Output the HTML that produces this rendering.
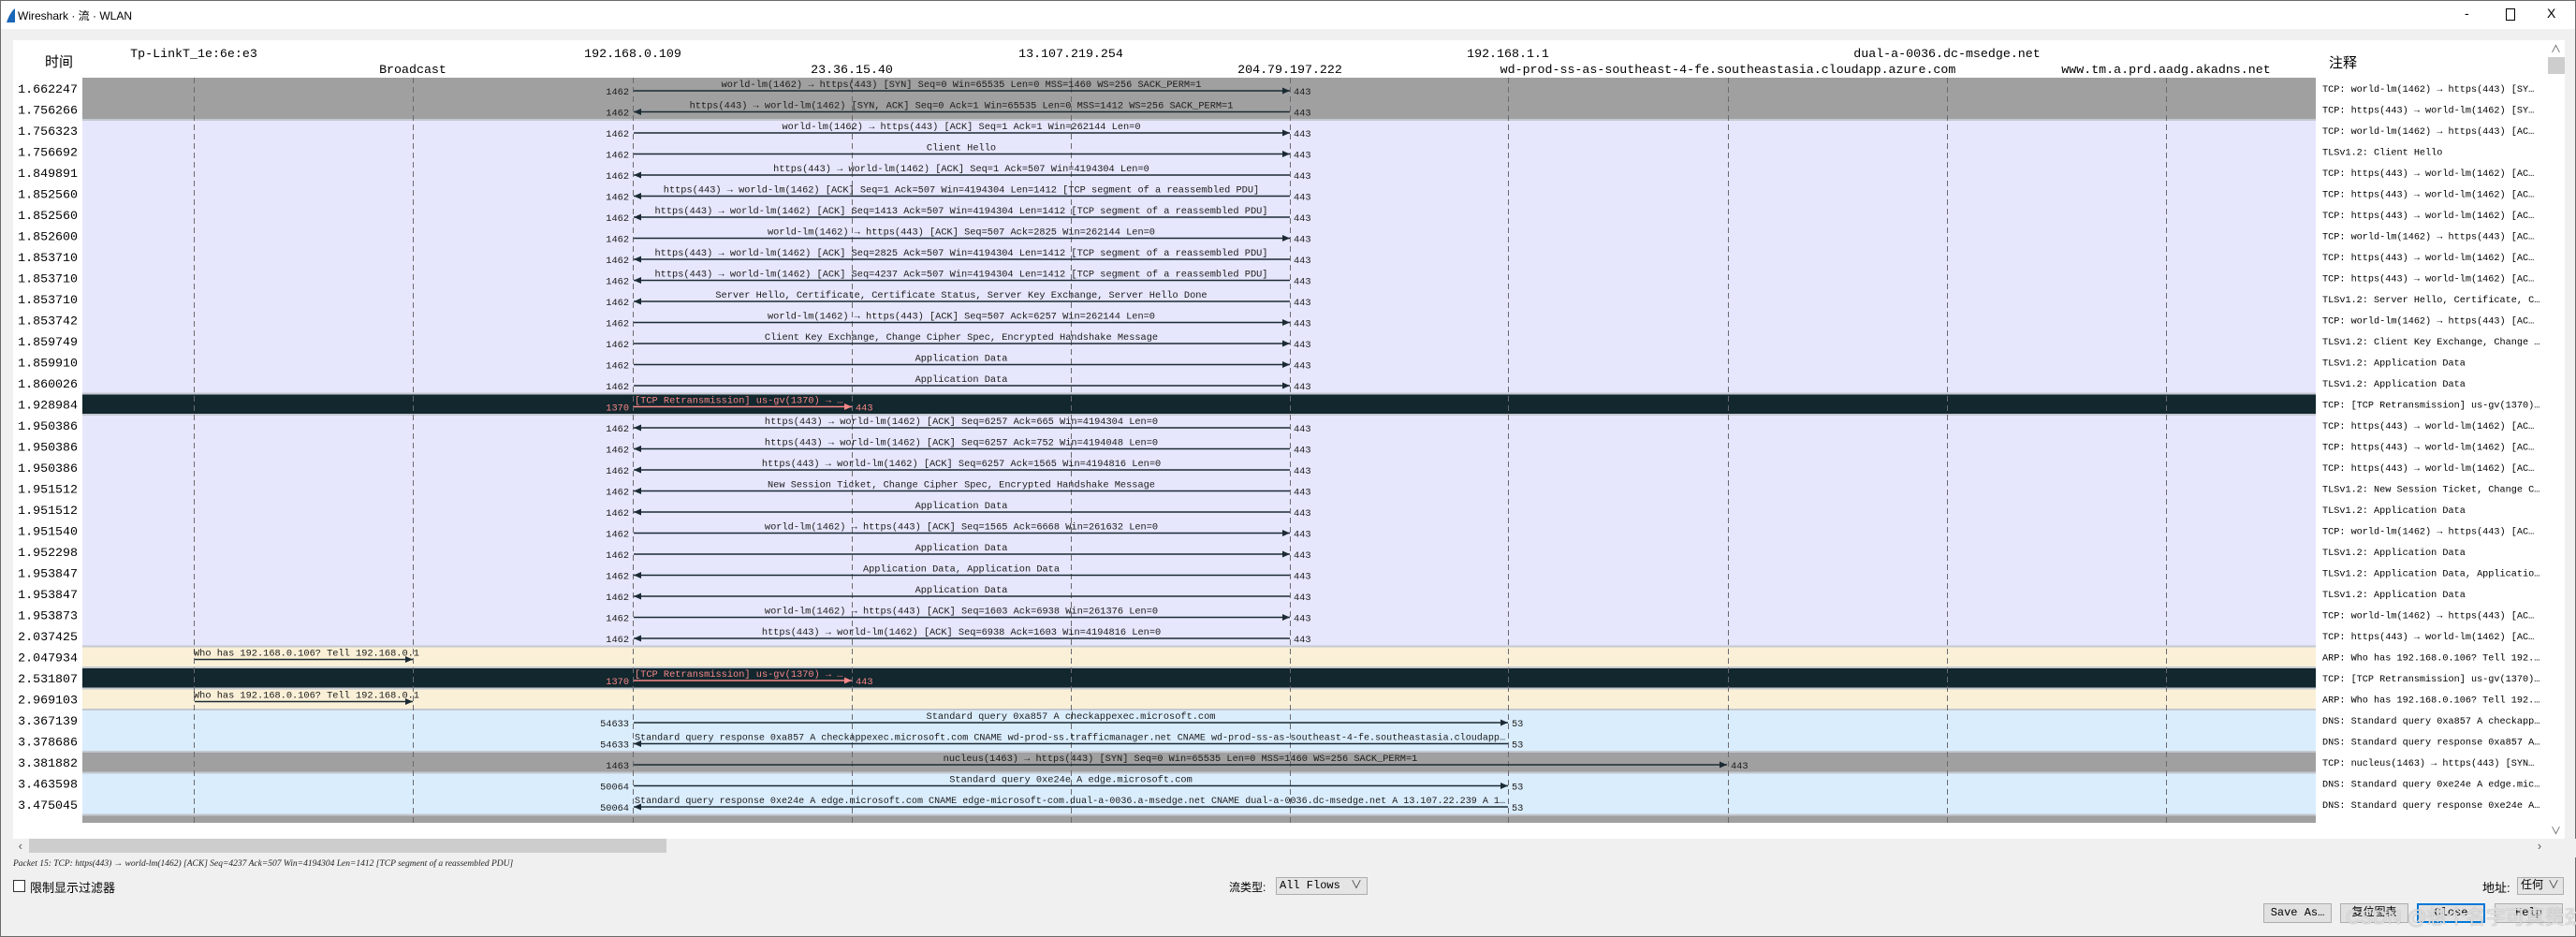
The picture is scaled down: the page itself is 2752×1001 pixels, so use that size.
<!DOCTYPE html>
<html><head><meta charset="utf-8">
<style>
html,body{margin:0;padding:0;}
body{width:2752px;height:1001px;position:relative;overflow:hidden;background:#f0f0f0;font-family:"Liberation Sans","Noto Sans CJK SC",sans-serif;}
.frame{position:absolute;left:0;top:0;width:2750px;height:999px;border:1px solid #6b6b6b;}
.title{position:absolute;left:1px;top:1px;width:2750px;height:30px;background:#fff;}
.abs{position:absolute;white-space:nowrap;}
.btn{position:absolute;top:965px;height:19px;border:1px solid #adadad;background:#e1e1e1;font:12px "Liberation Mono","Noto Sans CJK SC",monospace;text-align:center;line-height:19px;color:#000;}
.combo{position:absolute;height:17px;border:1px solid #adadad;background:#e5e5e5;font:12px "Liberation Mono","Noto Sans CJK SC",monospace;line-height:17px;}
svg text{font-family:"Liberation Mono","Noto Sans CJK SC",monospace;}
.t{font-size:13.3px;fill:#000;}
.l{font-size:10.3px;fill:#1b1b1b;}
.p{font-size:10.3px;fill:#1b1b1b;}
.c{font-size:10.2px;fill:#000;}
.r{fill:#f78787;}
</style></head><body>
<div class="frame"></div>
<div class="title">
  <svg class="abs" style="left:6px;top:8px" width="10" height="15"><path d="M9,0 L9,15 L0,15 C2,9 5,3 9,0Z" fill="#1a66b8"/></svg>
  <div class="abs" style="left:18px;top:7px;font-size:12px;color:#000;">Wireshark · 流 · WLAN</div>
  <div class="abs" style="left:2632px;top:5px;font-size:14px;">-</div>
  <div class="abs" style="left:2676px;top:8px;width:8px;height:11px;border:1px solid #000;"></div>
  <div class="abs" style="left:2720px;top:5px;font-size:14px;">X</div>
</div>

<svg class="abs" style="left:0;top:0" width="2752" height="1001">
<defs>
<marker id="a" markerUnits="userSpaceOnUse" markerWidth="8" markerHeight="7" refX="8" refY="3.5" orient="auto"><path d="M0,0 L8,3.5 L0,7z" fill="#1b2a33"/></marker>
<marker id="ar" markerUnits="userSpaceOnUse" markerWidth="8" markerHeight="7" refX="8" refY="3.5" orient="auto"><path d="M0,0 L8,3.5 L0,7z" fill="#f78787"/></marker>
</defs>
<rect x="14" y="43" width="2708" height="853" fill="#fff"/>
<!-- header -->
<text class="t" x="63" y="71" text-anchor="middle" style="font-size:15px">时间</text>
<text class="t" x="2488" y="72" style="font-size:15px">注释</text>
<g class="t" text-anchor="middle">
<text x="207" y="61">Tp-LinkT_1e:6e:e3</text>
<text x="441" y="78">Broadcast</text>
<text x="676" y="61">192.168.0.109</text>
<text x="910" y="78">23.36.15.40</text>
<text x="1144" y="61">13.107.219.254</text>
<text x="1378" y="78">204.79.197.222</text>
<text x="1611" y="61">192.168.1.1</text>
<text x="1846" y="78">wd-prod-ss-as-southeast-4-fe.southeastasia.cloudapp.azure.com</text>
<text x="2080" y="61">dual-a-0036.dc-msedge.net</text>
<text x="2314" y="78">www.tm.a.prd.aadg.akadns.net</text>
</g>
<!-- backgrounds -->
<g>
<rect x="88" y="83" width="2386" height="45" fill="#a0a0a0"/>
<rect x="88" y="128" width="2386" height="292.5" fill="#e6e6fc"/>
<rect x="88" y="420.5" width="2386" height="22.5" fill="#12272e"/>
<rect x="88" y="443" width="2386" height="247.5" fill="#e6e6fc"/>
<rect x="88" y="690.5" width="2386" height="22.5" fill="#faf0d7"/>
<rect x="88" y="713" width="2386" height="22.5" fill="#12272e"/>
<rect x="88" y="735.5" width="2386" height="22.5" fill="#faf0d7"/>
<rect x="88" y="758" width="2386" height="45" fill="#daedfd"/>
<rect x="88" y="803" width="2386" height="22.5" fill="#a0a0a0"/>
<rect x="88" y="825.5" width="2386" height="45" fill="#daedfd"/>
<rect x="88" y="870.5" width="2386" height="8.5" fill="#a0a0a0"/>
<g fill="#c4c8d0"><rect x="88" y="127" width="2386" height="2"/><rect x="88" y="419.5" width="2386" height="2"/><rect x="88" y="442" width="2386" height="2"/><rect x="88" y="689.5" width="2386" height="2"/><rect x="88" y="712" width="2386" height="2"/><rect x="88" y="734.5" width="2386" height="2"/><rect x="88" y="757" width="2386" height="2"/><rect x="88" y="802" width="2386" height="2"/><rect x="88" y="824.5" width="2386" height="2"/><rect x="88" y="869.5" width="2386" height="2"/></g>
</g>
<!-- dashed lifelines -->
<g stroke="#6a6a70" stroke-width="1" stroke-dasharray="6,4">
<line x1="207.5" y1="83" x2="207.5" y2="879"/><line x1="441.5" y1="83" x2="441.5" y2="879"/><line x1="676.5" y1="83" x2="676.5" y2="879"/><line x1="910.5" y1="83" x2="910.5" y2="879"/><line x1="1144.5" y1="83" x2="1144.5" y2="879"/><line x1="1378.5" y1="83" x2="1378.5" y2="879"/><line x1="1611.5" y1="83" x2="1611.5" y2="879"/><line x1="1846.5" y1="83" x2="1846.5" y2="879"/><line x1="2080.5" y1="83" x2="2080.5" y2="879"/><line x1="2314.5" y1="83" x2="2314.5" y2="879"/>
</g>

<!-- rows -->
<g stroke-width="1.5">
<g transform="translate(0,83)"><text class="t" x="83" y="16" text-anchor="end">1.662247</text><line x1="677" y1="14" x2="1378" y2="14" stroke="#1b2a33" marker-end="url(#a)"/><text class="l" x="1027" y="10" text-anchor="middle">world-lm(1462) → https(443) [SYN] Seq=0 Win=65535 Len=0 MSS=1460 WS=256 SACK_PERM=1</text><text class="p" x="672" y="18" text-anchor="end">1462</text><text class="p" x="1382" y="18">443</text><text class="c" x="2481" y="15">TCP: world-lm(1462) → https(443) [SY…</text></g>
<g transform="translate(0,105.5)"><text class="t" x="83" y="16" text-anchor="end">1.756266</text><line x1="1378" y1="14" x2="677" y2="14" stroke="#1b2a33" marker-end="url(#a)"/><text class="l" x="1027" y="10" text-anchor="middle">https(443) → world-lm(1462) [SYN, ACK] Seq=0 Ack=1 Win=65535 Len=0 MSS=1412 WS=256 SACK_PERM=1</text><text class="p" x="672" y="18" text-anchor="end">1462</text><text class="p" x="1382" y="18">443</text><text class="c" x="2481" y="15">TCP: https(443) → world-lm(1462) [SY…</text></g>
<g transform="translate(0,128)"><text class="t" x="83" y="16" text-anchor="end">1.756323</text><line x1="677" y1="14" x2="1378" y2="14" stroke="#1b2a33" marker-end="url(#a)"/><text class="l" x="1027" y="10" text-anchor="middle">world-lm(1462) → https(443) [ACK] Seq=1 Ack=1 Win=262144 Len=0</text><text class="p" x="672" y="18" text-anchor="end">1462</text><text class="p" x="1382" y="18">443</text><text class="c" x="2481" y="15">TCP: world-lm(1462) → https(443) [AC…</text></g>
<g transform="translate(0,150.5)"><text class="t" x="83" y="16" text-anchor="end">1.756692</text><line x1="677" y1="14" x2="1378" y2="14" stroke="#1b2a33" marker-end="url(#a)"/><text class="l" x="1027" y="10" text-anchor="middle">Client Hello</text><text class="p" x="672" y="18" text-anchor="end">1462</text><text class="p" x="1382" y="18">443</text><text class="c" x="2481" y="15">TLSv1.2: Client Hello</text></g>
<g transform="translate(0,173)"><text class="t" x="83" y="16" text-anchor="end">1.849891</text><line x1="1378" y1="14" x2="677" y2="14" stroke="#1b2a33" marker-end="url(#a)"/><text class="l" x="1027" y="10" text-anchor="middle">https(443) → world-lm(1462) [ACK] Seq=1 Ack=507 Win=4194304 Len=0</text><text class="p" x="672" y="18" text-anchor="end">1462</text><text class="p" x="1382" y="18">443</text><text class="c" x="2481" y="15">TCP: https(443) → world-lm(1462) [AC…</text></g>
<g transform="translate(0,195.5)"><text class="t" x="83" y="16" text-anchor="end">1.852560</text><line x1="1378" y1="14" x2="677" y2="14" stroke="#1b2a33" marker-end="url(#a)"/><text class="l" x="1027" y="10" text-anchor="middle">https(443) → world-lm(1462) [ACK] Seq=1 Ack=507 Win=4194304 Len=1412 [TCP segment of a reassembled PDU]</text><text class="p" x="672" y="18" text-anchor="end">1462</text><text class="p" x="1382" y="18">443</text><text class="c" x="2481" y="15">TCP: https(443) → world-lm(1462) [AC…</text></g>
<g transform="translate(0,218)"><text class="t" x="83" y="16" text-anchor="end">1.852560</text><line x1="1378" y1="14" x2="677" y2="14" stroke="#1b2a33" marker-end="url(#a)"/><text class="l" x="1027" y="10" text-anchor="middle">https(443) → world-lm(1462) [ACK] Seq=1413 Ack=507 Win=4194304 Len=1412 [TCP segment of a reassembled PDU]</text><text class="p" x="672" y="18" text-anchor="end">1462</text><text class="p" x="1382" y="18">443</text><text class="c" x="2481" y="15">TCP: https(443) → world-lm(1462) [AC…</text></g>
<g transform="translate(0,240.5)"><text class="t" x="83" y="16" text-anchor="end">1.852600</text><line x1="677" y1="14" x2="1378" y2="14" stroke="#1b2a33" marker-end="url(#a)"/><text class="l" x="1027" y="10" text-anchor="middle">world-lm(1462) → https(443) [ACK] Seq=507 Ack=2825 Win=262144 Len=0</text><text class="p" x="672" y="18" text-anchor="end">1462</text><text class="p" x="1382" y="18">443</text><text class="c" x="2481" y="15">TCP: world-lm(1462) → https(443) [AC…</text></g>
<g transform="translate(0,263)"><text class="t" x="83" y="16" text-anchor="end">1.853710</text><line x1="1378" y1="14" x2="677" y2="14" stroke="#1b2a33" marker-end="url(#a)"/><text class="l" x="1027" y="10" text-anchor="middle">https(443) → world-lm(1462) [ACK] Seq=2825 Ack=507 Win=4194304 Len=1412 [TCP segment of a reassembled PDU]</text><text class="p" x="672" y="18" text-anchor="end">1462</text><text class="p" x="1382" y="18">443</text><text class="c" x="2481" y="15">TCP: https(443) → world-lm(1462) [AC…</text></g>
<g transform="translate(0,285.5)"><text class="t" x="83" y="16" text-anchor="end">1.853710</text><line x1="1378" y1="14" x2="677" y2="14" stroke="#1b2a33" marker-end="url(#a)"/><text class="l" x="1027" y="10" text-anchor="middle">https(443) → world-lm(1462) [ACK] Seq=4237 Ack=507 Win=4194304 Len=1412 [TCP segment of a reassembled PDU]</text><text class="p" x="672" y="18" text-anchor="end">1462</text><text class="p" x="1382" y="18">443</text><text class="c" x="2481" y="15">TCP: https(443) → world-lm(1462) [AC…</text></g>
<g transform="translate(0,308)"><text class="t" x="83" y="16" text-anchor="end">1.853710</text><line x1="1378" y1="14" x2="677" y2="14" stroke="#1b2a33" marker-end="url(#a)"/><text class="l" x="1027" y="10" text-anchor="middle">Server Hello, Certificate, Certificate Status, Server Key Exchange, Server Hello Done</text><text class="p" x="672" y="18" text-anchor="end">1462</text><text class="p" x="1382" y="18">443</text><text class="c" x="2481" y="15">TLSv1.2: Server Hello, Certificate, C…</text></g>
<g transform="translate(0,330.5)"><text class="t" x="83" y="16" text-anchor="end">1.853742</text><line x1="677" y1="14" x2="1378" y2="14" stroke="#1b2a33" marker-end="url(#a)"/><text class="l" x="1027" y="10" text-anchor="middle">world-lm(1462) → https(443) [ACK] Seq=507 Ack=6257 Win=262144 Len=0</text><text class="p" x="672" y="18" text-anchor="end">1462</text><text class="p" x="1382" y="18">443</text><text class="c" x="2481" y="15">TCP: world-lm(1462) → https(443) [AC…</text></g>
<g transform="translate(0,353)"><text class="t" x="83" y="16" text-anchor="end">1.859749</text><line x1="677" y1="14" x2="1378" y2="14" stroke="#1b2a33" marker-end="url(#a)"/><text class="l" x="1027" y="10" text-anchor="middle">Client Key Exchange, Change Cipher Spec, Encrypted Handshake Message</text><text class="p" x="672" y="18" text-anchor="end">1462</text><text class="p" x="1382" y="18">443</text><text class="c" x="2481" y="15">TLSv1.2: Client Key Exchange, Change …</text></g>
<g transform="translate(0,375.5)"><text class="t" x="83" y="16" text-anchor="end">1.859910</text><line x1="677" y1="14" x2="1378" y2="14" stroke="#1b2a33" marker-end="url(#a)"/><text class="l" x="1027" y="10" text-anchor="middle">Application Data</text><text class="p" x="672" y="18" text-anchor="end">1462</text><text class="p" x="1382" y="18">443</text><text class="c" x="2481" y="15">TLSv1.2: Application Data</text></g>
<g transform="translate(0,398)"><text class="t" x="83" y="16" text-anchor="end">1.860026</text><line x1="677" y1="14" x2="1378" y2="14" stroke="#1b2a33" marker-end="url(#a)"/><text class="l" x="1027" y="10" text-anchor="middle">Application Data</text><text class="p" x="672" y="18" text-anchor="end">1462</text><text class="p" x="1382" y="18">443</text><text class="c" x="2481" y="15">TLSv1.2: Application Data</text></g>
<g transform="translate(0,420.5)"><text class="t" x="83" y="16" text-anchor="end">1.928984</text><line x1="677" y1="14" x2="910" y2="14" stroke="#f78787" marker-end="url(#ar)"/><text class="l r" x="678" y="10">[TCP Retransmission] us-gv(1370) → …</text><text class="p r" x="672" y="18" text-anchor="end">1370</text><text class="p r" x="914" y="18">443</text><text class="c" x="2481" y="15">TCP: [TCP Retransmission] us-gv(1370)…</text></g>
<g transform="translate(0,443)"><text class="t" x="83" y="16" text-anchor="end">1.950386</text><line x1="1378" y1="14" x2="677" y2="14" stroke="#1b2a33" marker-end="url(#a)"/><text class="l" x="1027" y="10" text-anchor="middle">https(443) → world-lm(1462) [ACK] Seq=6257 Ack=665 Win=4194304 Len=0</text><text class="p" x="672" y="18" text-anchor="end">1462</text><text class="p" x="1382" y="18">443</text><text class="c" x="2481" y="15">TCP: https(443) → world-lm(1462) [AC…</text></g>
<g transform="translate(0,465.5)"><text class="t" x="83" y="16" text-anchor="end">1.950386</text><line x1="1378" y1="14" x2="677" y2="14" stroke="#1b2a33" marker-end="url(#a)"/><text class="l" x="1027" y="10" text-anchor="middle">https(443) → world-lm(1462) [ACK] Seq=6257 Ack=752 Win=4194048 Len=0</text><text class="p" x="672" y="18" text-anchor="end">1462</text><text class="p" x="1382" y="18">443</text><text class="c" x="2481" y="15">TCP: https(443) → world-lm(1462) [AC…</text></g>
<g transform="translate(0,488)"><text class="t" x="83" y="16" text-anchor="end">1.950386</text><line x1="1378" y1="14" x2="677" y2="14" stroke="#1b2a33" marker-end="url(#a)"/><text class="l" x="1027" y="10" text-anchor="middle">https(443) → world-lm(1462) [ACK] Seq=6257 Ack=1565 Win=4194816 Len=0</text><text class="p" x="672" y="18" text-anchor="end">1462</text><text class="p" x="1382" y="18">443</text><text class="c" x="2481" y="15">TCP: https(443) → world-lm(1462) [AC…</text></g>
<g transform="translate(0,510.5)"><text class="t" x="83" y="16" text-anchor="end">1.951512</text><line x1="1378" y1="14" x2="677" y2="14" stroke="#1b2a33" marker-end="url(#a)"/><text class="l" x="1027" y="10" text-anchor="middle">New Session Ticket, Change Cipher Spec, Encrypted Handshake Message</text><text class="p" x="672" y="18" text-anchor="end">1462</text><text class="p" x="1382" y="18">443</text><text class="c" x="2481" y="15">TLSv1.2: New Session Ticket, Change C…</text></g>
<g transform="translate(0,533)"><text class="t" x="83" y="16" text-anchor="end">1.951512</text><line x1="1378" y1="14" x2="677" y2="14" stroke="#1b2a33" marker-end="url(#a)"/><text class="l" x="1027" y="10" text-anchor="middle">Application Data</text><text class="p" x="672" y="18" text-anchor="end">1462</text><text class="p" x="1382" y="18">443</text><text class="c" x="2481" y="15">TLSv1.2: Application Data</text></g>
<g transform="translate(0,555.5)"><text class="t" x="83" y="16" text-anchor="end">1.951540</text><line x1="677" y1="14" x2="1378" y2="14" stroke="#1b2a33" marker-end="url(#a)"/><text class="l" x="1027" y="10" text-anchor="middle">world-lm(1462) → https(443) [ACK] Seq=1565 Ack=6668 Win=261632 Len=0</text><text class="p" x="672" y="18" text-anchor="end">1462</text><text class="p" x="1382" y="18">443</text><text class="c" x="2481" y="15">TCP: world-lm(1462) → https(443) [AC…</text></g>
<g transform="translate(0,578)"><text class="t" x="83" y="16" text-anchor="end">1.952298</text><line x1="677" y1="14" x2="1378" y2="14" stroke="#1b2a33" marker-end="url(#a)"/><text class="l" x="1027" y="10" text-anchor="middle">Application Data</text><text class="p" x="672" y="18" text-anchor="end">1462</text><text class="p" x="1382" y="18">443</text><text class="c" x="2481" y="15">TLSv1.2: Application Data</text></g>
<g transform="translate(0,600.5)"><text class="t" x="83" y="16" text-anchor="end">1.953847</text><line x1="1378" y1="14" x2="677" y2="14" stroke="#1b2a33" marker-end="url(#a)"/><text class="l" x="1027" y="10" text-anchor="middle">Application Data, Application Data</text><text class="p" x="672" y="18" text-anchor="end">1462</text><text class="p" x="1382" y="18">443</text><text class="c" x="2481" y="15">TLSv1.2: Application Data, Applicatio…</text></g>
<g transform="translate(0,623)"><text class="t" x="83" y="16" text-anchor="end">1.953847</text><line x1="1378" y1="14" x2="677" y2="14" stroke="#1b2a33" marker-end="url(#a)"/><text class="l" x="1027" y="10" text-anchor="middle">Application Data</text><text class="p" x="672" y="18" text-anchor="end">1462</text><text class="p" x="1382" y="18">443</text><text class="c" x="2481" y="15">TLSv1.2: Application Data</text></g>
<g transform="translate(0,645.5)"><text class="t" x="83" y="16" text-anchor="end">1.953873</text><line x1="677" y1="14" x2="1378" y2="14" stroke="#1b2a33" marker-end="url(#a)"/><text class="l" x="1027" y="10" text-anchor="middle">world-lm(1462) → https(443) [ACK] Seq=1603 Ack=6938 Win=261376 Len=0</text><text class="p" x="672" y="18" text-anchor="end">1462</text><text class="p" x="1382" y="18">443</text><text class="c" x="2481" y="15">TCP: world-lm(1462) → https(443) [AC…</text></g>
<g transform="translate(0,668)"><text class="t" x="83" y="16" text-anchor="end">2.037425</text><line x1="1378" y1="14" x2="677" y2="14" stroke="#1b2a33" marker-end="url(#a)"/><text class="l" x="1027" y="10" text-anchor="middle">https(443) → world-lm(1462) [ACK] Seq=6938 Ack=1603 Win=4194816 Len=0</text><text class="p" x="672" y="18" text-anchor="end">1462</text><text class="p" x="1382" y="18">443</text><text class="c" x="2481" y="15">TCP: https(443) → world-lm(1462) [AC…</text></g>
<g transform="translate(0,690.5)"><text class="t" x="83" y="16" text-anchor="end">2.047934</text><line x1="208" y1="14" x2="441" y2="14" stroke="#1b2a33" marker-end="url(#a)"/><text class="l" x="207" y="10">Who has 192.168.0.106? Tell 192.168.0.1</text><text class="c" x="2481" y="15">ARP: Who has 192.168.0.106? Tell 192.…</text></g>
<g transform="translate(0,713)"><text class="t" x="83" y="16" text-anchor="end">2.531807</text><line x1="677" y1="14" x2="910" y2="14" stroke="#f78787" marker-end="url(#ar)"/><text class="l r" x="678" y="10">[TCP Retransmission] us-gv(1370) → …</text><text class="p r" x="672" y="18" text-anchor="end">1370</text><text class="p r" x="914" y="18">443</text><text class="c" x="2481" y="15">TCP: [TCP Retransmission] us-gv(1370)…</text></g>
<g transform="translate(0,735.5)"><text class="t" x="83" y="16" text-anchor="end">2.969103</text><line x1="208" y1="14" x2="441" y2="14" stroke="#1b2a33" marker-end="url(#a)"/><text class="l" x="207" y="10">Who has 192.168.0.106? Tell 192.168.0.1</text><text class="c" x="2481" y="15">ARP: Who has 192.168.0.106? Tell 192.…</text></g>
<g transform="translate(0,758)"><text class="t" x="83" y="16" text-anchor="end">3.367139</text><line x1="677" y1="14" x2="1611" y2="14" stroke="#1b2a33" marker-end="url(#a)"/><text class="l" x="1144" y="10" text-anchor="middle">Standard query 0xa857 A checkappexec.microsoft.com</text><text class="p" x="672" y="18" text-anchor="end">54633</text><text class="p" x="1615" y="18">53</text><text class="c" x="2481" y="15">DNS: Standard query 0xa857 A checkapp…</text></g>
<g transform="translate(0,780.5)"><text class="t" x="83" y="16" text-anchor="end">3.378686</text><line x1="1611" y1="14" x2="677" y2="14" stroke="#1b2a33" marker-end="url(#a)"/><text class="l" x="678" y="10" textLength="930" lengthAdjust="spacingAndGlyphs">Standard query response 0xa857 A checkappexec.microsoft.com CNAME wd-prod-ss.trafficmanager.net CNAME wd-prod-ss-as-southeast-4-fe.southeastasia.cloudapp…</text><text class="p" x="672" y="18" text-anchor="end">54633</text><text class="p" x="1615" y="18">53</text><text class="c" x="2481" y="15">DNS: Standard query response 0xa857 A…</text></g>
<g transform="translate(0,803)"><text class="t" x="83" y="16" text-anchor="end">3.381882</text><line x1="677" y1="14" x2="1845" y2="14" stroke="#1b2a33" marker-end="url(#a)"/><text class="l" x="1261" y="10" text-anchor="middle">nucleus(1463) → https(443) [SYN] Seq=0 Win=65535 Len=0 MSS=1460 WS=256 SACK_PERM=1</text><text class="p" x="672" y="18" text-anchor="end">1463</text><text class="p" x="1849" y="18">443</text><text class="c" x="2481" y="15">TCP: nucleus(1463) → https(443) [SYN…</text></g>
<g transform="translate(0,825.5)"><text class="t" x="83" y="16" text-anchor="end">3.463598</text><line x1="677" y1="14" x2="1611" y2="14" stroke="#1b2a33" marker-end="url(#a)"/><text class="l" x="1144" y="10" text-anchor="middle">Standard query 0xe24e A edge.microsoft.com</text><text class="p" x="672" y="18" text-anchor="end">50064</text><text class="p" x="1615" y="18">53</text><text class="c" x="2481" y="15">DNS: Standard query 0xe24e A edge.mic…</text></g>
<g transform="translate(0,848)"><text class="t" x="83" y="16" text-anchor="end">3.475045</text><line x1="1611" y1="14" x2="677" y2="14" stroke="#1b2a33" marker-end="url(#a)"/><text class="l" x="678" y="10" textLength="930" lengthAdjust="spacingAndGlyphs">Standard query response 0xe24e A edge.microsoft.com CNAME edge-microsoft-com.dual-a-0036.a-msedge.net CNAME dual-a-0036.dc-msedge.net A 13.107.22.239 A 1…</text><text class="p" x="672" y="18" text-anchor="end">50064</text><text class="p" x="1615" y="18">53</text><text class="c" x="2481" y="15">DNS: Standard query response 0xe24e A…</text></g>
</g>

<!-- vertical scrollbar -->
<rect x="2722" y="43" width="18" height="853" fill="#fff"/>
<rect x="2722" y="896" width="30" height="20" fill="#f0f0f0"/>
<text x="2725" y="56" style="font-size:11px;fill:#555">∧</text>
<rect x="2722" y="61" width="18" height="18" fill="#cdcdcd"/>
<text x="2725" y="891" style="font-size:11px;fill:#555">∨</text>
<!-- horizontal scrollbar -->
<rect x="31" y="896" width="681" height="15" fill="#cdcdcd"/>
<text x="18" y="908" style="font-size:13px;fill:#606060">‹</text>
<text x="2709" y="908" style="font-size:13px;fill:#606060">›</text>
</svg>

<div class="abs" style="left:14px;top:918px;font:italic 9.5px 'Liberation Serif',serif;color:#222;">Packet 15: TCP: https(443) → world-lm(1462) [ACK] Seq=4237 Ack=507 Win=4194304 Len=1412 [TCP segment of a reassembled PDU]</div>
<div class="abs" style="left:14px;top:940px;width:11px;height:11px;border:1px solid #333;background:#fff;"></div>
<div class="abs" style="left:32px;top:938px;font-size:13px;color:#000;">限制显示过滤器</div>
<div class="abs" style="left:1313px;top:939px;font-size:12px;color:#000;">流类型:</div>
<div class="combo" style="left:1363px;top:937px;width:96px;"><span style="margin-left:3px">All Flows</span><span style="position:absolute;right:5px;top:0;color:#444">∨</span></div>
<div class="abs" style="left:2652px;top:938px;font-size:13px;color:#000;">地址:</div>
<div class="combo" style="left:2689px;top:937px;width:48px;"><span style="margin-left:3px">任何</span><span style="position:absolute;right:4px;top:0;color:#444">∨</span></div>
<div class="btn" style="left:2418px;width:71px;">Save As…</div>
<div class="btn" style="left:2500px;width:71px;">复位图表</div>
<div class="btn" style="left:2582px;width:69px;border:2px solid #0078d7;height:17px;line-height:17px;">Close</div>
<div class="btn" style="left:2665px;width:71px;">Help</div>
<div class="abs" style="left:2506px;top:964px;font-size:21px;color:rgba(235,235,235,0.85);text-shadow:0 0 1px #888;">CSDN @想个名字可真费劲</div>
</body></html>
